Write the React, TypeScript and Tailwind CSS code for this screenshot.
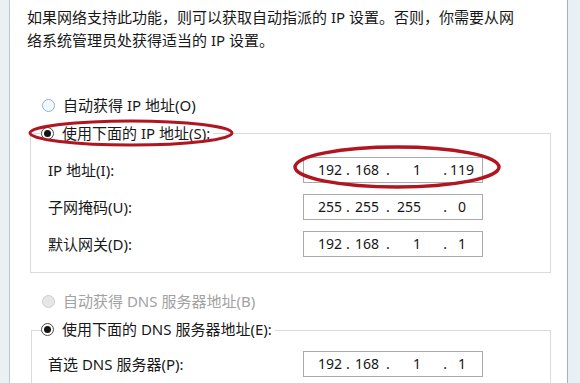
import React from "react";

const font = { fontFamily: '"Noto Sans", "Noto Sans CJK SC", sans-serif' };

function Radio({ kind }: { kind: "off" | "on" | "disabled" }) {
  if (kind === "on") {
    return (
      <span className="w-[13px] h-[13px] rounded-full border border-[#4a4a4a] bg-white flex items-center justify-center shrink-0">
        <span className="w-[7px] h-[7px] rounded-full bg-[#141414]" />
      </span>
    );
  }
  if (kind === "disabled") {
    return <span className="w-[13px] h-[13px] rounded-full border border-[#cdcdcd] bg-[#e6e6e6] shrink-0" />;
  }
  return <span className="w-[13px] h-[13px] rounded-full border border-[#8cb3d6] bg-[#f4f8fc] shrink-0" />;
}

function IpBox({ v }: { v: [string, string, string, string] }) {
  return (
    <div className="w-[180px] h-[26px] border border-[#a9a9a9] bg-white flex items-center text-[14px] text-[#161616] leading-none">
      <span className="w-[38px] text-right">{v[0]}</span>
      <span className="w-[12px] text-center">.</span>
      <span className="w-[25px] text-right">{v[1]}</span>
      <span className="w-[18px] text-center">.</span>
      <span className="w-[24px] text-right">{v[2]}</span>
      <span className="w-[26px] text-right">.</span>
      <span className="w-[28px] text-center ml-[1px]">{v[3]}</span>
    </div>
  );
}

function Row({ label, v, first }: { label: string; v: [string, string, string, string]; first?: boolean }) {
  return (
    <div className={`flex items-center h-[26px] ${first ? "mt-[14px]" : "mt-[11px]"}`}>
      <span className="w-[255px] text-[#181818]">{label}</span>
      <IpBox v={v} />
    </div>
  );
}

export default function App() {
  return (
    <div className="w-[580px] h-[383px] relative overflow-hidden bg-white flex text-[15px] leading-[20px]" style={font}>
      <div className="w-[10px] h-full bg-[#eaf0f4] border-r border-[#bfc7cd]" />
      <div className="flex-1 flex flex-col">
        <div className="pt-[6px] pl-[17px] leading-[23px] text-[#181818]">
          <div>如果网络支持此功能，则可以获取自动指派的 IP 设置。否则，你需要从网</div>
          <div>络系统管理员处获得适当的 IP 设置。</div>
        </div>

        <div className="mt-[43px] ml-[32px] h-[20px] flex items-center gap-[8px] text-[#181818]">
          <Radio kind="off" />
          <span>自动获得 IP 地址(O)</span>
        </div>

        <div className="mt-[18px] ml-[20px] mr-[16px] border border-[#dadada] pl-[17px] pb-[15px]">
          <div className="-mt-[11px] -ml-[7px] h-[20px] w-fit flex items-center gap-[8px] bg-white pr-[3px] text-[#181818]">
            <Radio kind="on" />
            <span>使用下面的 IP 地址(S):</span>
          </div>
          <Row first label="IP 地址(I):" v={["192", "168", "1", "119"]} />
          <Row label="子网掩码(U):" v={["255", "255", "255", "0"]} />
          <div className="mt-[1px]">
            <Row label="默认网关(D):" v={["192", "168", "1", "1"]} />
          </div>
        </div>

        <div className="mt-[18px] ml-[32px] h-[20px] flex items-center gap-[8px] text-[#a2a2a2]">
          <Radio kind="disabled" />
          <span>自动获得 DNS 服务器地址(B)</span>
        </div>

        <div className="mt-[19px] ml-[21px] mr-[16px] border-t border-l border-r border-[#dadada] pl-[16px] flex-1">
          <div className="-mt-[12px] -ml-[7px] h-[20px] w-fit flex items-center gap-[8px] bg-white pr-[3px] text-[#181818]">
            <Radio kind="on" />
            <span>使用下面的 DNS 服务器地址(E):</span>
          </div>
          <div className="flex items-center h-[28px] mt-[11px]">
            <span className="w-[255px] text-[#181818]">首选 DNS 服务器(P):</span>
            <IpBox v={["192", "168", "1", "1"]} />
          </div>
        </div>
      </div>
      <div className="w-[13px] h-full bg-[#e9f0f5] border-l border-[#a7b1b8]" />

      <svg className="absolute inset-0 pointer-events-none" width="580" height="383" viewBox="0 0 580 383">
        <ellipse cx="131" cy="133" rx="101" ry="12" fill="none" stroke="#b01520" strokeWidth="3" />
        <ellipse cx="397" cy="167" rx="102" ry="20" fill="none" stroke="#b01520" strokeWidth="3.5" />
      </svg>
    </div>
  );
}
